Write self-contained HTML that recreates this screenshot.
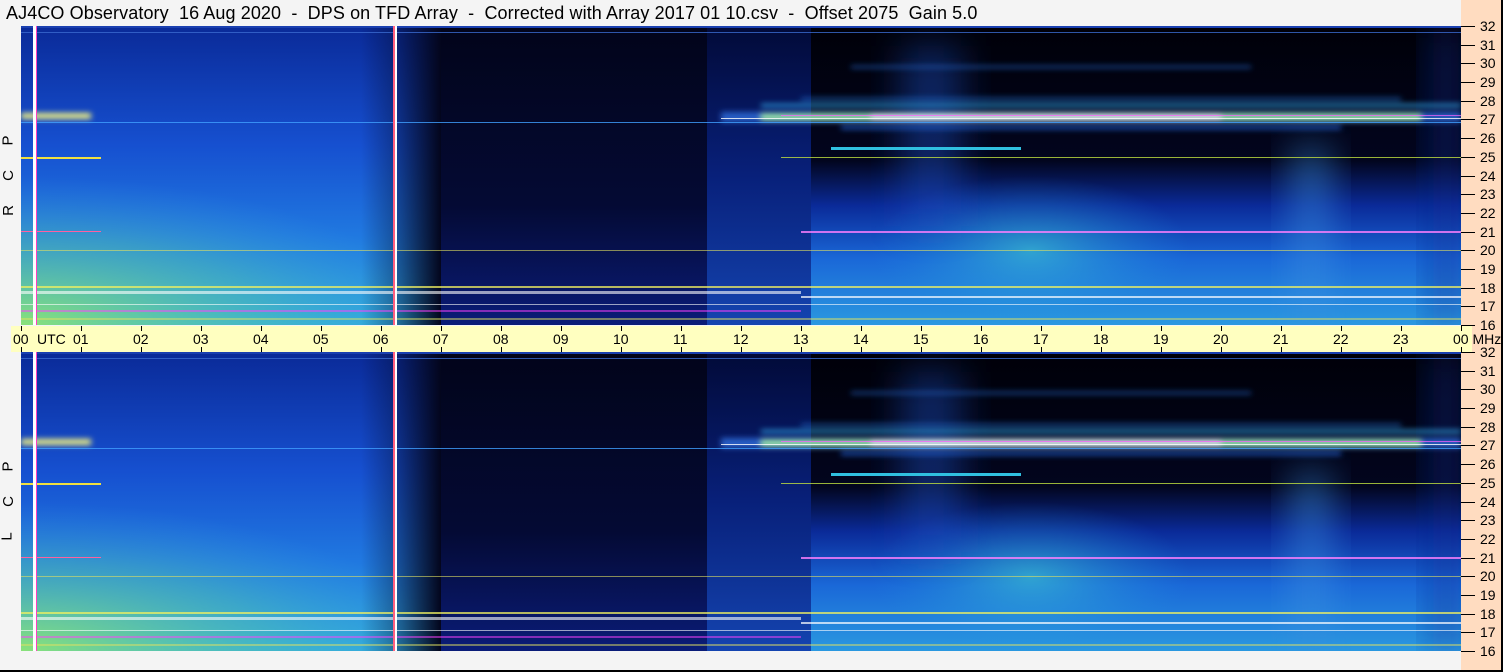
<!DOCTYPE html>
<html><head><meta charset="utf-8"><style>
html,body{margin:0;padding:0}
body{width:1503px;height:672px;background:#f4f4f4;position:relative;overflow:hidden;font-family:"Liberation Sans",sans-serif}
.title{position:absolute;left:6px;top:3px;font-size:18px;color:#000;white-space:pre;letter-spacing:0.1px}
.peach{position:absolute;left:1461px;top:0;width:40px;height:672px;background:#ffdcc0}
.rb{position:absolute;left:1501px;top:0;width:2px;height:672px;background:#000}
.bb{position:absolute;left:0;top:670px;width:1503px;height:2px;background:#000}
.axis{position:absolute;left:11px;top:326px;width:1461px;height:26px;background:#ffffc0}
.panel{position:absolute;left:21px;width:1440px;height:299px}
.lbl{position:absolute;left:3px;font-size:15px;transform:rotate(-90deg);transform-origin:center}
.hr{position:absolute;font-size:14px;top:331px;white-space:nowrap}
.tk{position:absolute;width:1px;height:5px;background:#000}
.rt{position:absolute;left:1461px;width:14px;height:1px;background:#000}
.rn{position:absolute;left:1480px;font-size:14px}
</style></head><body>
<div class="title">AJ4CO Observatory  16 Aug 2020  -  DPS on TFD Array  -  Corrected with Array 2017 01 10.csv  -  Offset 2075  Gain 5.0</div>
<div class="peach"></div><div class="rb"></div><div class="bb"></div>
<svg width="0" height="0" style="position:absolute">
<defs>
<filter id="bl" x="-50%" y="-50%" width="200%" height="200%"><feGaussianBlur stdDeviation="18"/></filter>
<filter id="bs" x="-20%" y="-200%" width="140%" height="500%"><feGaussianBlur stdDeviation="3"/></filter>
<linearGradient id="gl" x1="0" y1="0" x2="0" y2="1"><stop offset="0" stop-color="#0a2a98"/><stop offset=".4" stop-color="#1650d0"/><stop offset=".7" stop-color="#2078e0"/><stop offset="1" stop-color="#30a8e0"/></linearGradient>
<linearGradient id="gf" x1="0" y1="0" x2="1" y2="0"><stop offset="0" stop-color="#03051c" stop-opacity="0"/><stop offset=".5" stop-color="#03051c" stop-opacity=".4"/><stop offset="1" stop-color="#03051c" stop-opacity="1"/></linearGradient>
<radialGradient id="gg" cx="0" cy="1" r="1"><stop offset="0" stop-color="#a0f060" stop-opacity=".8"/><stop offset=".6" stop-color="#60d0a0" stop-opacity=".35"/><stop offset="1" stop-color="#40b0e0" stop-opacity="0"/></radialGradient>
<linearGradient id="gm" x1="0" y1="0" x2="0" y2="1"><stop offset="0" stop-color="#02041a"/><stop offset=".6" stop-color="#040a34"/><stop offset="1" stop-color="#0a1c78"/></linearGradient>
<linearGradient id="gn" x1="0" y1="0" x2="0" y2="1"><stop offset="0" stop-color="#020a38"/><stop offset=".5" stop-color="#08207a"/><stop offset="1" stop-color="#1444b0"/></linearGradient>
<linearGradient id="gr" x1="0" y1="0" x2="0" y2="1"><stop offset="0" stop-color="#000008"/><stop offset=".45" stop-color="#02051e"/><stop offset=".6" stop-color="#0a2a98"/><stop offset=".78" stop-color="#1a68d8"/><stop offset="1" stop-color="#2a98e0"/></linearGradient>
<radialGradient id="gc" cx=".5" cy=".5" r=".5"><stop offset="0" stop-color="#40d0d0" stop-opacity=".6"/><stop offset="1" stop-color="#2090e0" stop-opacity="0"/></radialGradient>
<symbol id="sp" viewBox="0 0 1440 299">
<rect width="1440" height="299" fill="#03051c"/>
<rect x="0" width="420" height="299" fill="url(#gl)"/>
<rect x="0" y="150" width="420" height="149" fill="url(#gg)"/>
<rect x="340" width="80" height="299" fill="url(#gf)"/>
<rect x="420" width="270" height="299" fill="url(#gm)"/>
<rect x="686" width="104" height="299" fill="url(#gn)"/>
<rect x="790" width="650" height="299" fill="url(#gr)"/>
<rect x="850" y="150" width="320" height="150" fill="url(#gc)"/>
<rect x="880" y="20" width="60" height="180" fill="#1a50c0" opacity=".45" filter="url(#bl)"/>
<rect x="1270" y="120" width="40" height="179" fill="#3a90e0" opacity=".5" filter="url(#bl)"/>
<rect x="1410" y="0" width="30" height="299" fill="#0a2a90" opacity=".5" filter="url(#bl)"/>
<g filter="url(#bs)">
<rect x="700" y="86" width="740" height="10" fill="#3070e0" opacity=".8"/>
<rect x="740" y="88" width="660" height="6" fill="#a0f0a0"/>
<rect x="850" y="89" width="350" height="4" fill="#ffffff"/>
<rect x="0" y="87" width="70" height="6" fill="#f0f080"/>
<rect x="740" y="78" width="700" height="3" fill="#30a0e0"/>
<rect x="780" y="72" width="600" height="2" fill="#2070d0"/>
<rect x="820" y="100" width="500" height="3" fill="#2060d0"/>
<rect x="830" y="40" width="400" height="2" fill="#2060c0"/>
</g>
<rect x="760" y="89" width="680" height="1" fill="#ff60ff" opacity=".7"/>
<rect x="700" y="92" width="740" height="1" fill="#ffffff" opacity=".8"/>
<rect x="0" y="96" width="1440" height="1" fill="#40a0ff" opacity=".8"/>
<rect x="0" y="6" width="1440" height="1" fill="#3a6ad0" opacity=".8"/>
<rect x="0" y="0" width="1440" height="2" fill="#1a40b0"/>
<rect x="0" y="131" width="80" height="2" fill="#f0e040"/>
<rect x="760" y="131" width="680" height="1" fill="#c0e040" opacity=".8"/>
<rect x="810" y="121" width="190" height="3" fill="#30c0e0"/>
<rect x="780" y="205" width="660" height="2" fill="#ff80ff" opacity=".8"/>
<rect x="0" y="205" width="80" height="1" fill="#ff60a0"/>
<rect x="0" y="224" width="1440" height="1" fill="#e0e060" opacity=".6"/>
<rect x="0" y="260" width="1440" height="2" fill="#f0f060" opacity=".75"/>
<rect x="0" y="265" width="780" height="3" fill="#ffffff" opacity=".6"/>
<rect x="780" y="270" width="660" height="2" fill="#ffffff" opacity=".7"/>
<rect x="0" y="278" width="1440" height="1" fill="#ffffff" opacity=".6"/>
<rect x="0" y="284" width="780" height="2" fill="#ff40ff" opacity=".5"/>
<rect x="0" y="292" width="1440" height="2" fill="#e0e060" opacity=".5"/>
<rect x="12" y="0" width="3" height="299" fill="#ffffff"/>
<rect x="15" y="0" width="1" height="299" fill="#ff40c0"/>
<rect x="372" y="0" width="2" height="299" fill="#ff6080"/>
<rect x="374" y="0" width="2" height="299" fill="#ffffff"/>
</symbol>
</defs></svg>
<svg class="panel" style="top:26px" viewBox="0 0 1440 299"><use href="#sp"/></svg>
<svg class="panel" style="top:352px" viewBox="0 0 1440 299"><use href="#sp"/></svg>
<div class="axis"></div>
<div class="lbl" style="top:132px">P</div>
<div class="lbl" style="top:167px">C</div>
<div class="lbl" style="top:202px">R</div>
<div class="lbl" style="top:458px">P</div>
<div class="lbl" style="top:493px">C</div>
<div class="lbl" style="top:528px">L</div>
<div style="position:absolute;left:0;top:0">
<div class="hr" style="left:13px">00</div><div class="hr" style="left:37px">UTC</div>
<div class="hr" style="left:73px">01</div><div class="hr" style="left:133px">02</div><div class="hr" style="left:193px">03</div><div class="hr" style="left:253px">04</div><div class="hr" style="left:313px">05</div><div class="hr" style="left:373px">06</div><div class="hr" style="left:433px">07</div><div class="hr" style="left:493px">08</div><div class="hr" style="left:553px">09</div><div class="hr" style="left:613px">10</div><div class="hr" style="left:673px">11</div><div class="hr" style="left:733px">12</div><div class="hr" style="left:793px">13</div><div class="hr" style="left:853px">14</div><div class="hr" style="left:913px">15</div><div class="hr" style="left:973px">16</div><div class="hr" style="left:1033px">17</div><div class="hr" style="left:1093px">18</div><div class="hr" style="left:1153px">19</div><div class="hr" style="left:1213px">20</div><div class="hr" style="left:1273px">21</div><div class="hr" style="left:1333px">22</div><div class="hr" style="left:1393px">23</div><div class="hr" style="left:1453px">00 MHz</div>
</div>
<div style="position:absolute;left:0;top:0">
<div class="tk" style="left:21px;top:326px"></div><div class="tk" style="left:21px;top:347px"></div>
<div class="tk" style="left:81px;top:326px"></div><div class="tk" style="left:81px;top:347px"></div>
<div class="tk" style="left:141px;top:326px"></div><div class="tk" style="left:141px;top:347px"></div>
<div class="tk" style="left:201px;top:326px"></div><div class="tk" style="left:201px;top:347px"></div>
<div class="tk" style="left:261px;top:326px"></div><div class="tk" style="left:261px;top:347px"></div>
<div class="tk" style="left:321px;top:326px"></div><div class="tk" style="left:321px;top:347px"></div>
<div class="tk" style="left:381px;top:326px"></div><div class="tk" style="left:381px;top:347px"></div>
<div class="tk" style="left:441px;top:326px"></div><div class="tk" style="left:441px;top:347px"></div>
<div class="tk" style="left:501px;top:326px"></div><div class="tk" style="left:501px;top:347px"></div>
<div class="tk" style="left:561px;top:326px"></div><div class="tk" style="left:561px;top:347px"></div>
<div class="tk" style="left:621px;top:326px"></div><div class="tk" style="left:621px;top:347px"></div>
<div class="tk" style="left:681px;top:326px"></div><div class="tk" style="left:681px;top:347px"></div>
<div class="tk" style="left:741px;top:326px"></div><div class="tk" style="left:741px;top:347px"></div>
<div class="tk" style="left:801px;top:326px"></div><div class="tk" style="left:801px;top:347px"></div>
<div class="tk" style="left:861px;top:326px"></div><div class="tk" style="left:861px;top:347px"></div>
<div class="tk" style="left:921px;top:326px"></div><div class="tk" style="left:921px;top:347px"></div>
<div class="tk" style="left:981px;top:326px"></div><div class="tk" style="left:981px;top:347px"></div>
<div class="tk" style="left:1041px;top:326px"></div><div class="tk" style="left:1041px;top:347px"></div>
<div class="tk" style="left:1101px;top:326px"></div><div class="tk" style="left:1101px;top:347px"></div>
<div class="tk" style="left:1161px;top:326px"></div><div class="tk" style="left:1161px;top:347px"></div>
<div class="tk" style="left:1221px;top:326px"></div><div class="tk" style="left:1221px;top:347px"></div>
<div class="tk" style="left:1281px;top:326px"></div><div class="tk" style="left:1281px;top:347px"></div>
<div class="tk" style="left:1341px;top:326px"></div><div class="tk" style="left:1341px;top:347px"></div>
<div class="tk" style="left:1401px;top:326px"></div><div class="tk" style="left:1401px;top:347px"></div>
<div class="tk" style="left:1461px;top:326px"></div><div class="tk" style="left:1461px;top:347px"></div>
</div>
<div style="position:absolute;left:0;top:0">
<div class="rt" style="top:26px"></div><div class="rn" style="top:18px">32</div>
<div class="rt" style="top:45px"></div><div class="rn" style="top:37px">31</div>
<div class="rt" style="top:63px"></div><div class="rn" style="top:55px">30</div>
<div class="rt" style="top:82px"></div><div class="rn" style="top:74px">29</div>
<div class="rt" style="top:101px"></div><div class="rn" style="top:93px">28</div>
<div class="rt" style="top:119px"></div><div class="rn" style="top:111px">27</div>
<div class="rt" style="top:138px"></div><div class="rn" style="top:130px">26</div>
<div class="rt" style="top:157px"></div><div class="rn" style="top:149px">25</div>
<div class="rt" style="top:176px"></div><div class="rn" style="top:168px">24</div>
<div class="rt" style="top:194px"></div><div class="rn" style="top:186px">23</div>
<div class="rt" style="top:213px"></div><div class="rn" style="top:205px">22</div>
<div class="rt" style="top:232px"></div><div class="rn" style="top:224px">21</div>
<div class="rt" style="top:250px"></div><div class="rn" style="top:242px">20</div>
<div class="rt" style="top:269px"></div><div class="rn" style="top:261px">19</div>
<div class="rt" style="top:288px"></div><div class="rn" style="top:280px">18</div>
<div class="rt" style="top:306px"></div><div class="rn" style="top:298px">17</div>
<div class="rt" style="top:325px"></div><div class="rn" style="top:317px">16</div>
<div class="rt" style="top:352px"></div><div class="rn" style="top:344px">32</div>
<div class="rt" style="top:371px"></div><div class="rn" style="top:363px">31</div>
<div class="rt" style="top:389px"></div><div class="rn" style="top:381px">30</div>
<div class="rt" style="top:408px"></div><div class="rn" style="top:400px">29</div>
<div class="rt" style="top:427px"></div><div class="rn" style="top:419px">28</div>
<div class="rt" style="top:445px"></div><div class="rn" style="top:437px">27</div>
<div class="rt" style="top:464px"></div><div class="rn" style="top:456px">26</div>
<div class="rt" style="top:483px"></div><div class="rn" style="top:475px">25</div>
<div class="rt" style="top:502px"></div><div class="rn" style="top:494px">24</div>
<div class="rt" style="top:520px"></div><div class="rn" style="top:512px">23</div>
<div class="rt" style="top:539px"></div><div class="rn" style="top:531px">22</div>
<div class="rt" style="top:558px"></div><div class="rn" style="top:550px">21</div>
<div class="rt" style="top:576px"></div><div class="rn" style="top:568px">20</div>
<div class="rt" style="top:595px"></div><div class="rn" style="top:587px">19</div>
<div class="rt" style="top:614px"></div><div class="rn" style="top:606px">18</div>
<div class="rt" style="top:632px"></div><div class="rn" style="top:624px">17</div>
<div class="rt" style="top:651px"></div><div class="rn" style="top:643px">16</div>
</div>
</body></html>
